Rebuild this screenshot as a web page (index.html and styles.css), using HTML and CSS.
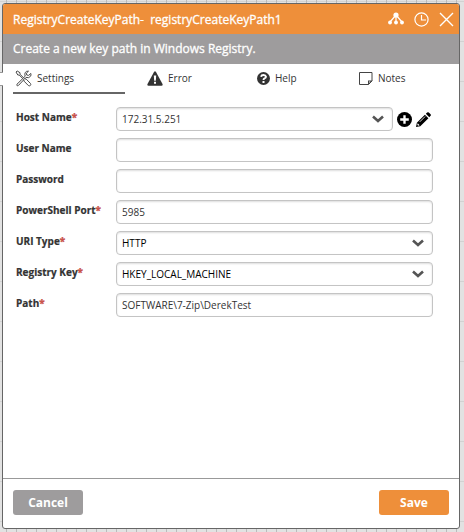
FILE: index.html
```html
<!DOCTYPE html>
<html lang="en">
<head>
<meta charset="utf-8">
<meta name="viewport" content="width=device-width, initial-scale=1">
<title>RegistryCreateKeyPath</title>
<link rel="stylesheet" href="styles.css">
</head>
<body>
<main class="dialog">
  <header class="title-bar">
    <h1 class="title">RegistryCreateKeyPath-&nbsp; registryCreateKeyPath1</h1>
    <div class="title-actions">
      <button type="button" aria-label="Hierarchy">
        <svg width="16" height="14" viewBox="0 0 16 14"><g stroke="#fff" stroke-width="1.2"><path d="M8 3 2 10M8 3v8M8 3l6 7"/></g><g fill="#fff"><circle cx="8" cy="3" r="2.6"/><circle cx="2" cy="10.5" r="1.9"/><circle cx="8" cy="10.5" r="1.9"/><circle cx="14" cy="10.5" r="1.9"/></g></svg>
      </button>
      <button type="button" aria-label="History">
        <svg width="15" height="15" viewBox="0 0 15 15" fill="none" stroke="#fff" stroke-width="1.2"><circle cx="7.500" cy="7.500" r="6.600"/><path d="M7.500 3v5H12"/></svg>
      </button>
      <button type="button" aria-label="Close">
        <svg width="15" height="15" viewBox="0 0 15 15" fill="none" stroke="#fff" stroke-width="1.400"><path d="M1 1l13 13M14 1 1 14"/></svg>
      </button>
    </div>
  </header>
  <p class="description">Create a new key path in Windows Registry.</p>
  <nav class="tabs">
    <a class="tab active" href="#settings">
      <svg width="17" height="17" viewBox="0 0 17 17" fill="none" stroke="#4a4a4a" stroke-linejoin="round"><path d="M10.200 6.200 2 14.200q-.8 1 .2 1.500.8.400 1.300-.3L11 7.400q3 1.100 4.600-1.200.7-1.200.2-2.800L13.700 5.400l-2-.400-.3-1.800 2.100-2Q11.300.800 10.200 2.600q-.8 1.600 0 3.600z"/><path fill="#fff" d="M1 2 2.200 1 5 2.700v1.500l4.600 4.600 1.600.3 4.300 4.400q.7 1.200-.2 2-.9.800-2 0L9.100 11.200l-.3-1.500L4.200 5H2.800z"/></svg>
      <span>Settings</span></a>
    <a class="tab" href="#error">
      <svg width="16" height="15" viewBox="0 0 16 15"><path fill="#333" d="M7 1q1-1.600 2 0l6.500 12q.6 1.600-1 1.700h-13q-1.600-.1-1-1.700z"/><path fill="#fff" d="M6.800 4.500h2.400L8.800 9.700H7.200zM7 10.700h2v2H7z"/></svg>
      <span>Error</span></a>
    <a class="tab" href="#help">
      <svg width="13" height="13" viewBox="0 0 13 13"><circle cx="6.500" cy="6.500" r="6.500" fill="#333"/><path fill="none" stroke="#fff" stroke-width="1.900" d="M4 4.700Q4.400 3 6.500 3T9 4.800Q9 5.900 7.500 6.400 6.500 6.800 6.500 8"/><path fill="#fff" d="M5.500 9h2v2h-2z"/></svg>
      <span>Help</span></a>
    <a class="tab" href="#notes">
      <svg width="14" height="13" viewBox="0 0 14 13"><path fill="none" stroke="#444" d="M.5.500h12.500v8.500L9.500 12.500H.5z"/><path fill="#444" d="M9 8.500h4.500L9 13z"/><path fill="#fff" d="M10 9.500h1.500L10 11z"/></svg>
      <span>Notes</span></a>
  </nav>
  <form class="form" id="settings">
    <div class="row">
      <label for="host">Host Name<b>*</b></label>
      <div class="control with-actions">
        <select id="host"><option>172.31.5.251</option></select>
        <button type="button" aria-label="Add host"><svg width="15" height="15" viewBox="0 0 14 14"><circle cx="7" cy="7" r="7"/><path stroke="#fff" stroke-width="2.200" d="M7 3v8M3 7h8"/></svg></button>
        <button type="button" aria-label="Edit host"><svg width="15" height="15" viewBox="0 0 14 14"><path d="M0 14 .8 10 8.300 2.500l3.300 3.300L4 13.200zM9.200 1.700 10.400.5q.8-.7 1.600 0L13.600 2q.7.800 0 1.600L12.400 4.800z"/><path fill="#fff" d="m1.600 10.600 1.800 1.800-1.400.4-.8-.8z"/><path stroke="#fff" stroke-width=".8" d="M3.500 9.200 8.500 4.200"/></svg></button>
      </div>
    </div>
    <div class="row"><label for="user">User Name</label><div class="control"><input id="user" type="text"></div></div>
    <div class="row"><label for="password">Password</label><div class="control"><input id="password" type="password"></div></div>
    <div class="row"><label for="port">PowerShell Port<b>*</b></label><div class="control"><input id="port" type="text" value="5985"></div></div>
    <div class="row"><label for="uri">URI Type<b>*</b></label><div class="control"><select class="strong" id="uri"><option>HTTP</option></select></div></div>
    <div class="row"><label for="key">Registry Key<b>*</b></label><div class="control"><select class="strong" id="key"><option>HKEY_LOCAL_MACHINE</option></select></div></div>
    <div class="row"><label for="path">Path<b>*</b></label><div class="control"><input id="path" type="text" value="SOFTWARE\7-Zip\DerekTest"></div></div>
  </form>
  <footer class="footer">
    <button type="button" class="button">Cancel</button>
    <button type="submit" form="settings" class="button primary">Save</button>
  </footer>
</main>
</body>
</html>
```
FILE: styles.css
```css
* { box-sizing: border-box; }

body {
  margin: 0;
  min-height: 100vh;
  padding: 3px 4px 3px 2px;
  display: flex;
  position: relative;
  font-family: "Open Sans", "Noto Sans", sans-serif;
  font-size: 11px;
  color: #333;
  background-color: #e2e2e2;
  /* Canvas grid: major lines every 40px, with minor ticks every 10px */
  background-image:
    linear-gradient(90deg, #bbb 1px, transparent 1px),
    linear-gradient(90deg, #d2d2d2 1px, transparent 1px),
    linear-gradient(#d2d2d2 1px, transparent 1px);
  background-size: 10px 530px, 40px 40px, 40px 40px;
  background-position: 6px 1px, 36px 0, 0 1px;
}

/* Connector handle on the dialog's left edge */
body::after {
  content: "";
  position: absolute;
  left: 0;
  top: 72px;
  width: 3px;
  height: 12px;
  border: 1px solid #999;
  border-width: 1px 0;
  background: #fff;
}

button {
  border: 0;
  padding: 0;
  background: none;
  font: inherit;
  cursor: pointer;
}

svg { display: block; flex: none; }

.dialog {
  flex: 1;
  min-width: 0;
  display: flex;
  flex-direction: column;
  border: 1px solid #666;
  border-radius: 3px;
  background: #fff;
  overflow: hidden;
}

.title-bar {
  height: 30px;
  padding: 0 5px 0 10px;
  display: flex;
  align-items: center;
  justify-content: space-between;
  background: #ee8f3a;
}

.title {
  margin: 0;
  font-size: 12px;
  font-weight: 400;
  color: #fff;
  -webkit-text-stroke: 0.3px #fff;
  white-space: pre;
}

.title-actions { display: flex; align-items: center; gap: 10px; }

.description {
  margin: 0;
  padding: 0 10px;
  font-size: 12px;
  -webkit-text-stroke: 0.3px #fff;
  line-height: 30px;
  color: #fff;
  background: #9e9c9d;
}

.tabs {
  display: grid;
  grid-template-columns: 112fr 110fr 102fr 90fr;
  padding: 0 32px 0 10px;
}

.tab {
  height: 30px;
  padding: 0 0 0 22px;
  display: flex;
  align-items: center;
  gap: 5px;
  border-bottom: 2px solid transparent;
  color: #333;
  font-size: 10px;
  text-decoration: none;
}

.tab.active { padding-left: 2px; border-color: #666; }

.form {
  flex: 1;
  padding: 13px 26px 13px 13px;
  display: flex;
  flex-direction: column;
  gap: 7px;
}

.row {
  display: grid;
  grid-template-columns: 100px 1fr;
  align-items: start;
}

label {
  line-height: 20px;
  font-size: 10px;
  font-weight: 700;
  -webkit-text-stroke: 0.2px;
  white-space: nowrap;
}

label b { color: #c9544c; }

.control {
  display: flex;
  align-items: center;
  gap: 4px;
}

.with-actions { padding-right: 2px; }

input,
select {
  flex: 1;
  min-width: 0;
  width: 100%;
  height: 24px;
  margin: 0;
  padding: 0 5px;
  border: 1px solid #c4c4c4;
  border-radius: 4px;
  box-shadow: inset 0 1px 2px #ddd;
  background-color: #fff;
  color: #333;
  font-family: inherit;
  font-size: 10px;
}

select {
  appearance: none;
  background-image: url("data:image/svg+xml,%3Csvg xmlns='http://www.w3.org/2000/svg' width='12' height='8' fill='none' stroke='%23555' stroke-width='2.600'%3E%3Cpath d='M1 1.500l5 4.500 5-4.500'/%3E%3C/svg%3E");
  background-repeat: no-repeat;
  background-position: right 8px center;
}

.strong { color: #000; }

.footer {
  padding: 11px 10px 13px;
  display: flex;
  justify-content: space-between;
  border-top: 1px solid #999;
}

.button {
  width: 70px;
  height: 25px;
  border-radius: 3px;
  background: #9e9c9d;
  color: #fff;
  font-size: 12px;
  font-weight: 700;
}

.primary { background: #ee8f3a; }
```
